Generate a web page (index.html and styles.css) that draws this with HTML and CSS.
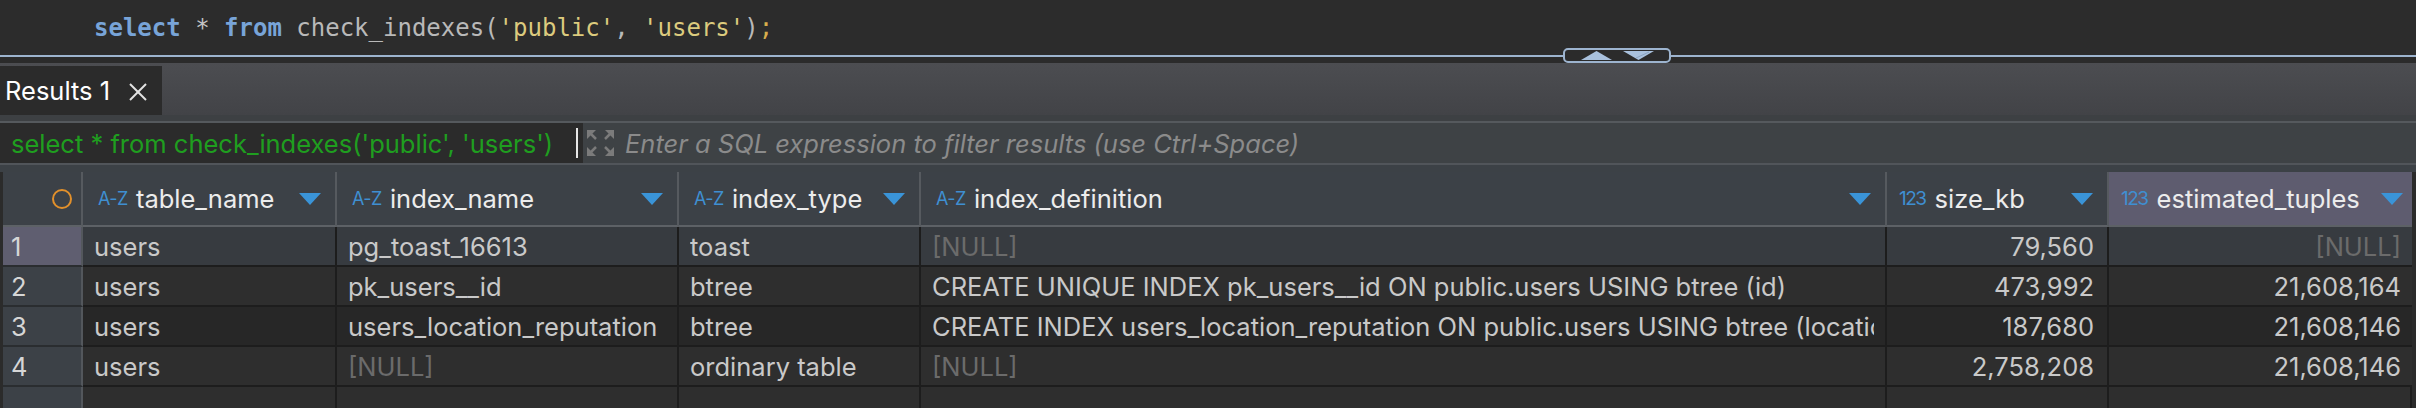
FILE: index.html
```html
<!DOCTYPE html>
<html>
<head>
<meta charset="utf-8">
<title>Results</title>
<link rel="stylesheet" href="styles.css">
</head>
<body>
<div class="app">
  <div class="editor">
    <span class="code"><span class="kw">select</span> <span class="op">*</span> <span class="kw">from</span> check_indexes(<span class="str">'public'</span>, <span class="str">'users'</span>)<span class="semi">;</span></span>
  </div>
  <div class="divider">
    <div class="handle">
      <svg class="tri" width="31" height="9" viewBox="0 0 31 9"><polygon points="15.5,0 31,9 0,9" fill="#a9c1dd"/></svg>
      <svg class="tri" width="31" height="9" viewBox="0 0 31 9"><polygon points="0,0 31,0 15.5,9" fill="#a9c1dd"/><line x1="13" y1="7" x2="26" y2="1" stroke="#8aa3c0" stroke-width="1"/></svg>
    </div>
  </div>
  <div class="gap6"></div>
  <div class="tabbar">
    <div class="tab">
      <span class="tab-title">Results 1</span>
      <svg width="18" height="18" viewBox="0 0 18 18"><line x1="1" y1="1" x2="17" y2="17" stroke="#e4e4e4" stroke-width="2"/><line x1="17" y1="1" x2="1" y2="17" stroke="#e4e4e4" stroke-width="2"/></svg>
    </div>
  </div>
  <div class="band"></div>
  <div class="filter">
    <div class="fq"><span>select * from check_indexes('public', 'users')</span><span class="cursor"></span></div>
    <div class="fi">
      <svg width="29" height="28" viewBox="0 0 29 28">
        <g fill="#7b7b7b" stroke="#7b7b7b" stroke-width="2.5">
          <polygon points="1,1 10,1 1,10" stroke="none"/>
          <line x1="4" y1="4" x2="10" y2="10"/>
          <polygon points="28,1 19,1 28,10" stroke="none"/>
          <line x1="25" y1="4" x2="19" y2="10"/>
          <polygon points="1,27 10,27 1,18" stroke="none"/>
          <line x1="4" y1="24" x2="10" y2="18"/>
          <polygon points="28,27 19,27 28,18" stroke="none"/>
          <line x1="25" y1="24" x2="19" y2="18"/>
        </g>
      </svg>
      <span class="placeholder">Enter a SQL expression to filter results (use Ctrl+Space)</span>
    </div>
  </div>
  <div class="filter-bottom"></div>
  <div class="grid-top"></div>
  <div class="grid">
    <div class="hc hc-num"><span class="dot"></span></div>
    <div class="hc"><span class="typ">A-Z</span><span class="hname">table_name</span><span class="fill"></span><span class="drop"></span></div>
    <div class="hc"><span class="typ">A-Z</span><span class="hname">index_name</span><span class="fill"></span><span class="drop"></span></div>
    <div class="hc"><span class="typ">A-Z</span><span class="hname">index_type</span><span class="fill"></span><span class="drop"></span></div>
    <div class="hc"><span class="typ">A-Z</span><span class="hname">index_definition</span><span class="fill"></span><span class="drop"></span></div>
    <div class="hc hc-n"><span class="typ typ-n">123</span><span class="hname">size_kb</span><span class="fill"></span><span class="drop"></span></div>
    <div class="hc hc-n hc-sel"><span class="typ typ-n">123</span><span class="hname">estimated_tuples</span><span class="fill"></span><span class="drop"></span></div>

    <div class="rn rn-sel">1</div>
    <div class="c r1"><span class="t">users</span></div>
    <div class="c r1"><span class="t">pg_toast_16613</span></div>
    <div class="c r1"><span class="t">toast</span></div>
    <div class="c r1 null"><span class="t">[NULL]</span></div>
    <div class="c r1 num"><span class="t">79,560</span></div>
    <div class="c r1 num last null"><span class="t">[NULL]</span></div>

    <div class="rn">2</div>
    <div class="c r2"><span class="t">users</span></div>
    <div class="c r2"><span class="t">pk_users__id</span></div>
    <div class="c r2"><span class="t">btree</span></div>
    <div class="c r2"><span class="t">CREATE UNIQUE INDEX pk_users__id ON public.users USING btree (id)</span></div>
    <div class="c r2 num"><span class="t">473,992</span></div>
    <div class="c r2 num last"><span class="t">21,608,164</span></div>

    <div class="rn">3</div>
    <div class="c r3"><span class="t">users</span></div>
    <div class="c r3"><span class="t">users_location_reputation</span></div>
    <div class="c r3"><span class="t">btree</span></div>
    <div class="c r3"><span class="t clip">CREATE INDEX users_location_reputation ON public.users USING btree (location, reputation)</span></div>
    <div class="c r3 num"><span class="t">187,680</span></div>
    <div class="c r3 num last"><span class="t">21,608,146</span></div>

    <div class="rn">4</div>
    <div class="c r2"><span class="t">users</span></div>
    <div class="c r2 null"><span class="t">[NULL]</span></div>
    <div class="c r2"><span class="t">ordinary table</span></div>
    <div class="c r2 null"><span class="t">[NULL]</span></div>
    <div class="c r2 num"><span class="t">2,758,208</span></div>
    <div class="c r2 num last"><span class="t">21,608,146</span></div>

    <div class="rn fillrow"></div>
    <div class="c r2 fillrow"></div>
    <div class="c r2 fillrow"></div>
    <div class="c r2 fillrow"></div>
    <div class="c r2 fillrow"></div>
    <div class="c r2 fillrow"></div>
    <div class="c r2 fillrow"></div>
  </div>
</div>
</body>
</html>
```

FILE: styles.css
```css
* { box-sizing: border-box; }
html, body { margin: 0; padding: 0; }
body {
  width: 2416px;
  height: 408px;
  overflow: hidden;
  background: #2b2b2b;
  font-family: "Inter", "Liberation Sans", Arial, sans-serif;
  font-size: 25.5px;
}
.app { display: flex; flex-direction: column; width: 2416px; height: 408px; }

.editor {
  height: 55px;
  flex: none;
  background: #2c2c2c;
  padding-left: 94px;
  display: flex;
  align-items: center;
}
.code {
  font-family: "DejaVu Sans Mono", "Liberation Mono", monospace;
  font-size: 24px;
  color: #b9b9b9;
  white-space: pre;
}
.kw { color: #78a4d8; font-weight: bold; }
.op { color: #c4c4c4; }
.str { color: #dccb7e; }
.semi { color: #d8ae4c; }

.divider { height: 2px; flex: none; background: #9db4cf; position: relative; }
.handle {
  position: absolute;
  left: 1563px;
  top: -7px;
  width: 108px;
  height: 15px;
  border: 2px solid #9db4cf;
  border-radius: 5px;
  background: #2b2b2b;
  display: flex;
  align-items: center;
  justify-content: center;
  gap: 11px;
}
.tri { display: block; }

.gap6 { height: 6px; flex: none; background: #2b2b2b; }
.tabbar {
  height: 52px;
  flex: none;
  background: linear-gradient(#4c4d51, #424347);
  display: flex;
  align-items: flex-end;
}
.tab {
  width: 162px;
  height: 49px;
  background: #2b2b2b;
  display: flex;
  align-items: center;
  padding-left: 5px;
  gap: 19px;
  color: #ffffff;
}
.tab svg { display: block; margin-top: 2px; }

.band { height: 8px; flex: none; background: #3d4043; border-bottom: 2px solid #55595d; }

.filter { height: 40px; flex: none; display: flex; background: #3e4245; }
.fq {
  width: 583px;
  background: #2b2b2b;
  display: flex;
  align-items: center;
  justify-content: space-between;
  padding: 0 5px 0 11px;
  color: #1f9e1f;
  white-space: nowrap;
}
.cursor { width: 2px; height: 30px; background: #e8e8e8; }
.fi { display: flex; align-items: center; padding-left: 3px; gap: 10px; }
.fi svg { display: block; }
.placeholder { font-style: italic; color: #8b8b8b; white-space: nowrap; }

.filter-bottom { height: 2px; flex: none; background: #51555a; }
.grid-top { height: 7px; flex: none; background: #3c4146; }

.grid {
  flex: 1;
  display: grid;
  grid-template-columns: 80px 254px 342px 242px 966px 222px 303px;
  grid-template-rows: 55px 40px 40px 40px 40px 1fr;
  padding: 0 4px 0 3px;
  background: #2b2b2b;
  overflow: hidden;
}

.hc {
  display: flex;
  align-items: center;
  padding: 0 14px 0 15px;
  background: #3c4147;
  border-right: 2px solid #565a5f;
  border-bottom: 2px solid #5d6166;
  color: #ececec;
  white-space: nowrap;
  overflow: hidden;
}
.hc-num { justify-content: flex-end; padding-right: 9px; }
.hc-n { padding-left: 12px; }
.hc-sel { background: #5e5c6f; border-right: none; padding-right: 9px; }
.dot {
  width: 20px;
  height: 20px;
  border: 2.5px solid #e2902b;
  border-radius: 50%;
}
.typ { color: #3f8fd1; font-size: 18px; margin-right: 8px; letter-spacing: -0.5px; }
.typ-n { font-size: 19px; letter-spacing: -1.5px; margin-right: 9px; }
.fill { flex: 1; }
.drop {
  width: 0;
  height: 0;
  border-left: 11px solid transparent;
  border-right: 11px solid transparent;
  border-top: 12px solid #3a94d8;
  margin-left: 6px;
  flex: none;
}

.rn {
  display: flex;
  align-items: center;
  padding-left: 8px;
  background: #3c4147;
  border-right: 2px solid #53575c;
  border-bottom: 2px solid #2a2d30;
  color: #d6d6d6;
}
.rn-sel { background: #5f5e70; }

.c {
  display: flex;
  align-items: center;
  padding: 0 11px;
  border-right: 2px solid #1d1d1d;
  border-bottom: 2px solid #1d1d1d;
  color: #c9c9c9;
  white-space: nowrap;
  overflow: hidden;
  min-width: 0;
}
.t { overflow: hidden; white-space: nowrap; min-width: 0; }
.clip { flex: 1; text-overflow: clip; }
.r1 { background: #373b40; }
.r2 { background: #2e2e2e; }
.r3 { background: #272727; }
.num { justify-content: flex-end; padding-right: 13px; }
.last { padding-right: 11px; border-right: none; }
.null { color: #6b6b6b; }
.fillrow { border-bottom: none; }
```
